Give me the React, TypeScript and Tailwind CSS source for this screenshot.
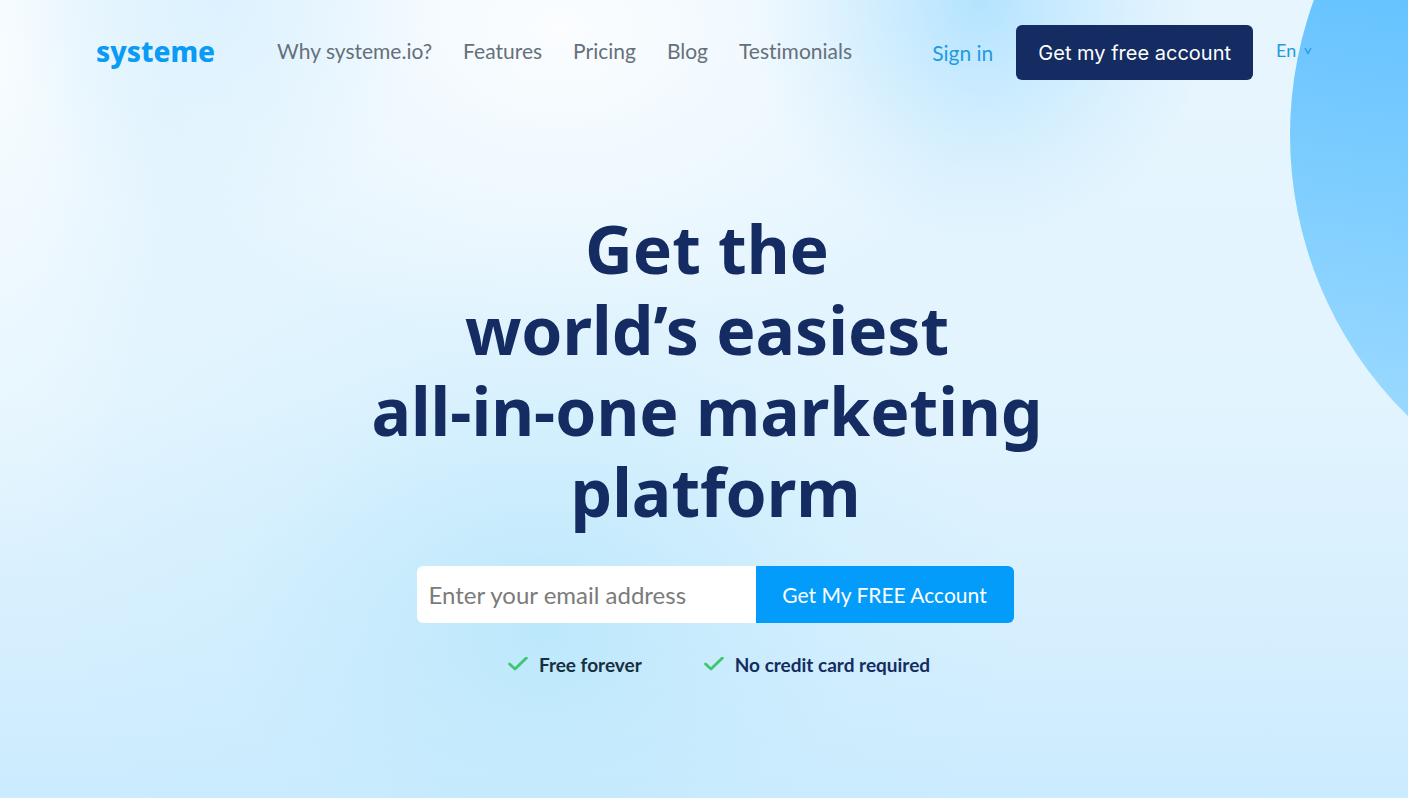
import React, { useState } from "react";

interface NavItem {
  label: string;
  href: string;
}

const navItems: NavItem[] = [
  { label: "Why systeme.io?", href: "#why" },
  { label: "Features", href: "#features" },
  { label: "Pricing", href: "#pricing" },
  { label: "Blog", href: "#blog" },
  { label: "Testimonials", href: "#testimonials" },
];

const CheckIcon = () => (
  <svg
    className="h-4 w-5"
    viewBox="0 0 20 16"
    fill="none"
    stroke="#3fc671"
    strokeWidth="2.8"
    strokeLinecap="round"
    strokeLinejoin="round"
    aria-hidden="true"
  >
    <path d="M1.6 7 L7 12 L18.4 0.9" />
  </svg>
);

const Header = () => {
  const [lang, setLang] = useState("en");

  return (
    <header className="flex items-center px-24 pt-[25px] text-[21px]">
      <a
        href="#home"
        className="pb-1 font-['Noto_Sans'] text-[28px] leading-[38px] font-extrabold text-[#0a9bf5]"
      >
        systeme
      </a>
      <nav className="ml-[62px] flex gap-[31px] pb-1 whitespace-nowrap text-[#66707a]">
        {navItems.map((item) => (
          <a key={item.href} href={item.href}>
            {item.label}
          </a>
        ))}
      </nav>
      <div className="ml-auto flex items-center whitespace-nowrap text-[#1f9ce0]">
        <a href="#signin">Sign in</a>
        <button
          type="button"
          className="ml-[23px] h-[55px] rounded-md bg-[#142c62] px-[22px] font-[Inter] text-[20px] text-white"
        >
          Get my free account
        </button>
        <label className="ml-[23px] flex items-center pb-1 text-[18px]">
          <select
            aria-label="Language"
            value={lang}
            onChange={(e) => setLang(e.target.value)}
            className="w-7 appearance-none bg-transparent"
          >
            <option value="en">En</option>
            <option value="fr">Fr</option>
            <option value="es">Es</option>
          </select>
          <svg
            className="h-2 w-2"
            viewBox="0 0 8 8"
            fill="none"
            stroke="currentColor"
            strokeWidth="1.2"
            aria-hidden="true"
          >
            <path d="M1 1 L4 6.4 L7 1" />
          </svg>
        </label>
      </div>
    </header>
  );
};

const Hero = () => {
  const [email, setEmail] = useState("");

  const handleSubmit = (e: React.FormEvent<HTMLFormElement>) => {
    e.preventDefault();
  };

  return (
    <main className="flex flex-col items-center pt-32 pb-[110px]">
      <h1 className="pl-1.5 text-center font-['Noto_Sans'] text-[66px] leading-[81px] font-bold text-[#142c62]">
        Get the
        <br />
        world’s easiest
        <br />
        all-in-one marketing
        <br />
        &nbsp;platform
      </h1>
      <form onSubmit={handleSubmit} className="mt-[34px] ml-[22px] flex h-[57px]">
        <input
          type="email"
          aria-label="Email address"
          placeholder="Enter your email address"
          value={email}
          onChange={(e) => setEmail(e.target.value)}
          className="w-[339px] rounded-l-md bg-white px-3 text-[24px] text-[#333] outline-none placeholder:text-[#7b7b7b]"
        />
        <button
          type="submit"
          className="w-[258px] rounded-r-md bg-[#049cfb] text-[21px] text-white"
        >
          Get My FREE Account
        </button>
      </form>
      <ul className="mt-7 ml-[30px] flex gap-[62px] text-[19px] font-bold">
        <li className="flex items-center gap-[11px] text-[#16303f]">
          <CheckIcon />
          Free forever
        </li>
        <li className="flex items-center gap-[11px] text-[#142c62]">
          <CheckIcon />
          No credit card required
        </li>
      </ul>
    </main>
  );
};

const App: React.FC = () => {
  return (
    <div className="relative min-h-screen overflow-hidden bg-[radial-gradient(ellipse_230px_250px_at_980px_0px,#b4e3ff_0%,#b8e5ffa0_35%,#bce6ff40_70%,#c0e8ff00_100%),radial-gradient(ellipse_200px_240px_at_220px_0px,#d8f0ffc0_0%,#dcf1ff00_100%),radial-gradient(ellipse_440px_320px_at_560px_30px,#fbfdff_0%,#f8fcffa0_40%,#f0f9ff00_100%),radial-gradient(ellipse_480px_400px_at_540px_630px,#bce8fc_0%,#bfe9fca0_30%,#c6ecfd40_65%,#c6ecfd00_100%),radial-gradient(ellipse_170px_520px_at_0px_60px,#f7fcff_0%,#f4fbff90_45%,#f0f9ff00_100%),linear-gradient(180deg,#e7f5fe_0%,#e2f4fe_50%,#d6effe_78%,#cbebfe_100%)] font-[Lato] [font-variant-ligatures:none]">
      {/* decorative circle behind the header */}
      <div className="absolute -top-[259px] -right-[670px] size-[788px] rounded-full bg-[linear-gradient(190deg,#5abeff_30%,#9cdaff_88%)]" />
      <div className="relative">
        <Header />
        <Hero />
      </div>
    </div>
  );
};

export default App;
